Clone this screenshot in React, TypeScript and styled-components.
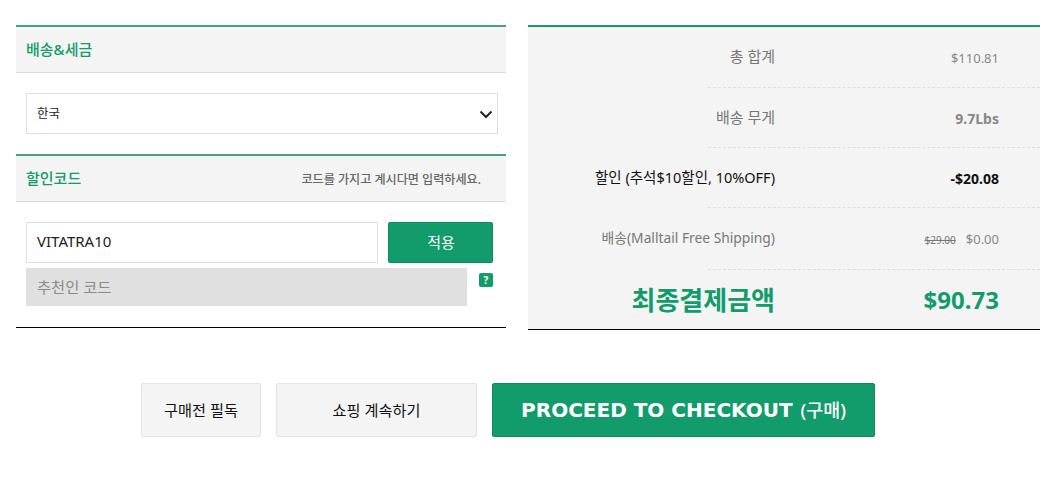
import React from 'react'
import styled, { createGlobalStyle } from 'styled-components'

const green = '#129b6b'
const fontStack = '"Noto Sans", "Noto Sans CJK KR", sans-serif'
const wideStack = '"DejaVu Sans", "Noto Sans CJK KR", sans-serif'

const GlobalStyle = createGlobalStyle`
  html, body {
    margin: 0;
    padding: 0;
    background: #fff;
    font-family: ${fontStack};
  }
  * {
    box-sizing: border-box;
  }
`

const Page = styled.div`
  width: 1045px;
  height: 497px;
  padding: 25px 5px 0 16px;
  overflow: hidden;
`

const Columns = styled.div`
  display: flex;
  align-items: flex-start;
  gap: 22px;
`

const LeftColumn = styled.div`
  width: 490px;
  height: 303px;
  border-bottom: 1px solid #000;
`

const SectionHeader = styled.div`
  height: 48px;
  padding: 0 25px 0 10px;
  display: flex;
  align-items: center;
  justify-content: space-between;
  background: #f4f4f4;
  border-top: 2px solid #45a27d;
  border-bottom: 1px solid #dcdcdc;
`

const SectionTitle = styled.h3`
  margin: 0;
  font-size: 15px;
  font-weight: 500;
  line-height: 1;
  color: ${green};
`

const SectionHint = styled.span`
  font-size: 12.1px;
  font-weight: 500;
  color: #666;
`

const SelectRow = styled.div`
  padding: 20px 8px 20px 10px;
`

const SelectBox = styled.div`
  height: 41px;
  padding: 0 4px 2px 10px;
  display: flex;
  align-items: center;
  justify-content: space-between;
  border: 1px solid #e0e0e0;
  font-size: 12.5px;
  color: #222;
`

const Chevron = styled.svg`
  width: 16px;
  height: 16px;
  margin: 2px -1px 0 0;
`

const CodeArea = styled.div`
  padding: 20px 13px 0 10px;
`

const CodeRow = styled.div`
  display: flex;
  gap: 10px;
`

const CodeInput = styled.div`
  width: 352px;
  height: 41px;
  padding: 0 10px 3px;
  display: flex;
  align-items: center;
  border: 1px solid #e0e0e0;
  font-size: 15px;
  color: #222;
`

const ApplyButton = styled.button`
  width: 105px;
  height: 41px;
  padding: 0 0 2px 1px;
  background: ${green};
  border: 1px solid #0f8a5f;
  border-radius: 2px;
  color: #fff;
  font-family: inherit;
  font-size: 15px;
`

const ReferralRow = styled.div`
  margin-top: 5px;
  display: flex;
  align-items: flex-start;
  justify-content: space-between;
`

const ReferralInput = styled.div`
  width: 441px;
  height: 38px;
  padding: 0 11px 2px;
  display: flex;
  align-items: center;
  background: #e0e0e0;
  font-size: 15.3px;
  color: #8a8a8a;
`

const HelpBadge = styled.span`
  width: 14px;
  height: 14px;
  margin-top: 5px;
  display: flex;
  align-items: center;
  justify-content: center;
  background: ${green};
  border-radius: 2px;
  color: #fff;
  font-size: 10px;
  font-weight: 700;
  line-height: 1;
`

const SummaryPanel = styled.div`
  width: 512px;
  height: 305px;
  background: #f4f4f4;
  border-top: 2px solid ${green};
  border-bottom: 1px solid #000;
  display: flex;
  flex-direction: column;
`

const SummaryRow = styled.div<{ $height: number; $last?: boolean }>`
  height: ${p => p.$height}px;
  position: relative;
  display: flex;
  align-items: center;
  justify-content: flex-end;
  ${p => !p.$last && `
    &::after {
      content: '';
      position: absolute;
      left: 180px;
      right: 0;
      bottom: 0;
      border-bottom: 1px dashed #dedede;
    }
  `}
`

const Label = styled.span<{ $color?: string; $size?: number }>`
  padding-bottom: 4px;
  font-size: ${p => p.$size || 15}px;
  color: ${p => p.$color || '#777'};
`

const ValueCell = styled.div`
  width: 265px;
  padding-right: 41px;
  display: flex;
  align-items: baseline;
  justify-content: flex-end;
  gap: 10px;
`

const Value = styled.span<{ $color?: string; $bold?: boolean }>`
  font-size: ${p => (p.$bold ? 14 : 13)}px;
  font-weight: ${p => (p.$bold ? 700 : 400)};
  color: ${p => p.$color || '#888'};
`

const OldPrice = styled.s`
  font-size: 10px;
  color: #777;
`

const TotalLabel = styled.span`
  padding-bottom: 2px;
  font-size: 26px;
  font-weight: 700;
  color: ${green};
`

const TotalValue = styled.span`
  font-size: 24px;
  font-weight: 700;
  color: ${green};
`

const Actions = styled.div`
  margin-top: 53px;
  padding-left: 125px;
  display: flex;
  gap: 15px;
`

const GreyButton = styled.button<{ $width: number }>`
  width: ${p => p.$width}px;
  height: 54px;
  padding: 0 0 2px;
  background: #f4f4f4;
  border: 1px solid #e4e4e4;
  border-radius: 2px;
  color: #111;
  font-family: inherit;
  font-size: 15.2px;
`

const CheckoutButton = styled.button`
  width: 383px;
  height: 54px;
  padding: 0 0 2px;
  background: ${green};
  border: 1px solid #0f8a5f;
  border-radius: 2px;
  color: #fff;
  font-family: ${wideStack};
  font-size: 20px;
  font-weight: 700;

  & > span {
    margin-left: 8px;
    font-family: ${fontStack};
    font-size: 18.4px;
    font-weight: 500;
  }
`

function App() {
  return (
    <Page>
      <GlobalStyle />
      <Columns>
        <LeftColumn>
          <SectionHeader>
            <SectionTitle>배송&세금</SectionTitle>
          </SectionHeader>
          <SelectRow>
            <SelectBox>
              한국
              <Chevron viewBox="0 0 16 16" fill="none" stroke="#222" strokeWidth="2">
                <path d="M2.5 5.5 8 11l5.5-5.5" />
              </Chevron>
            </SelectBox>
          </SelectRow>
          <SectionHeader>
            <SectionTitle>할인코드</SectionTitle>
            <SectionHint>코드를 가지고 계시다면 입력하세요.</SectionHint>
          </SectionHeader>
          <CodeArea>
            <CodeRow>
              <CodeInput>VITATRA10</CodeInput>
              <ApplyButton>적용</ApplyButton>
            </CodeRow>
            <ReferralRow>
              <ReferralInput>추천인 코드</ReferralInput>
              <HelpBadge>?</HelpBadge>
            </ReferralRow>
          </CodeArea>
        </LeftColumn>
        <SummaryPanel>
          <SummaryRow $height={61}>
            <Label>총 합계</Label>
            <ValueCell>
              <Value>$110.81</Value>
            </ValueCell>
          </SummaryRow>
          <SummaryRow $height={60}>
            <Label>배송 무게</Label>
            <ValueCell>
              <Value $bold>9.7Lbs</Value>
            </ValueCell>
          </SummaryRow>
          <SummaryRow $height={60}>
            <Label $color="#111" $size={14.5}>할인 (추석$10할인, 10%OFF)</Label>
            <ValueCell>
              <Value $bold $color="#111">-$20.08</Value>
            </ValueCell>
          </SummaryRow>
          <SummaryRow $height={62}>
            <Label $size={13.8}>배송(Malltail Free Shipping)</Label>
            <ValueCell>
              <OldPrice>$29.00</OldPrice>
              <Value>$0.00</Value>
            </ValueCell>
          </SummaryRow>
          <SummaryRow $height={59} $last>
            <TotalLabel>최종결제금액</TotalLabel>
            <ValueCell>
              <TotalValue>$90.73</TotalValue>
            </ValueCell>
          </SummaryRow>
        </SummaryPanel>
      </Columns>
      <Actions>
        <GreyButton $width={120}>구매전 필독</GreyButton>
        <GreyButton $width={201}>쇼핑 계속하기</GreyButton>
        <CheckoutButton>
          PROCEED TO CHECKOUT<span>(구매)</span>
        </CheckoutButton>
      </Actions>
    </Page>
  )
}

export default App
